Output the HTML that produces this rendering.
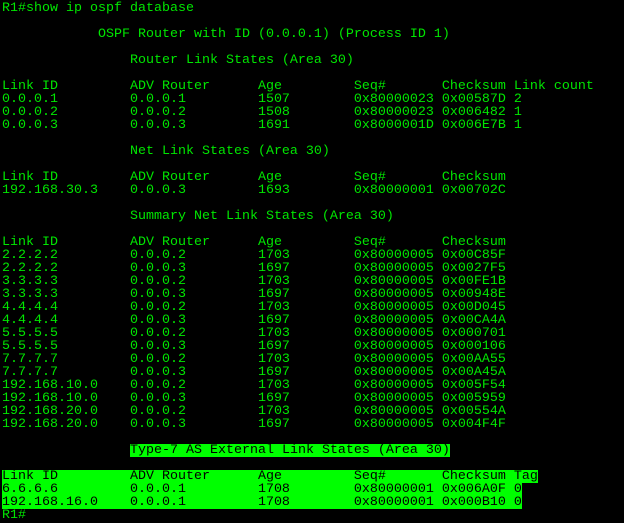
<!DOCTYPE html>
<html><head><meta charset="utf-8"><style>
html,body{margin:0;padding:0;background:#000;width:624px;height:523px;overflow:hidden}
pre{margin:0;padding:2px 0 0 2px;font-family:"Liberation Mono",monospace;font-size:13.33px;line-height:13px;color:#00e600;white-space:pre}
.h{background:#00ff00;color:#000;display:inline-block;height:13px;vertical-align:top}
</style></head><body><pre>R1#show ip ospf database

            OSPF Router with ID (0.0.0.1) (Process ID 1)

                Router Link States (Area 30)

Link ID         ADV Router      Age         Seq#       Checksum Link count
0.0.0.1         0.0.0.1         1507        0x80000023 0x00587D 2
0.0.0.2         0.0.0.2         1508        0x80000023 0x006482 1
0.0.0.3         0.0.0.3         1691        0x8000001D 0x006E7B 1

                Net Link States (Area 30)

Link ID         ADV Router      Age         Seq#       Checksum
192.168.30.3    0.0.0.3         1693        0x80000001 0x00702C

                Summary Net Link States (Area 30)

Link ID         ADV Router      Age         Seq#       Checksum
2.2.2.2         0.0.0.2         1703        0x80000005 0x00C85F
2.2.2.2         0.0.0.3         1697        0x80000005 0x0027F5
3.3.3.3         0.0.0.2         1703        0x80000005 0x00FE1B
3.3.3.3         0.0.0.3         1697        0x80000005 0x00948E
4.4.4.4         0.0.0.2         1703        0x80000005 0x00D045
4.4.4.4         0.0.0.3         1697        0x80000005 0x00CA4A
5.5.5.5         0.0.0.2         1703        0x80000005 0x000701
5.5.5.5         0.0.0.3         1697        0x80000005 0x000106
7.7.7.7         0.0.0.2         1703        0x80000005 0x00AA55
7.7.7.7         0.0.0.3         1697        0x80000005 0x00A45A
192.168.10.0    0.0.0.2         1703        0x80000005 0x005F54
192.168.10.0    0.0.0.3         1697        0x80000005 0x005959
192.168.20.0    0.0.0.2         1703        0x80000005 0x00554A
192.168.20.0    0.0.0.3         1697        0x80000005 0x004F4F

                <span class="h">Type-7 AS External Link States (Area 30)</span>

<span class="h">Link ID         ADV Router      Age         Seq#       Checksum Tag</span>
<span class="h">6.6.6.6         0.0.0.1         1708        0x80000001 0x006A0F 0</span>
<span class="h">192.168.16.0    0.0.0.1         1708        0x80000001 0x000B10 0</span>
R1#</pre></body></html>
